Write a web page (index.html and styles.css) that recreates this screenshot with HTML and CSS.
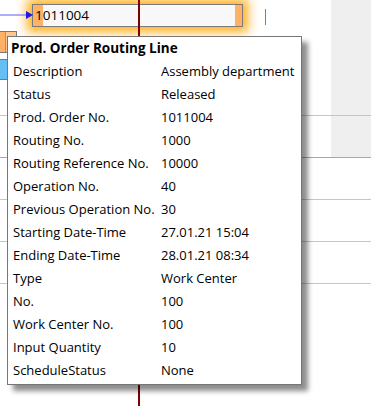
FILE: index.html
```html
<!DOCTYPE html>
<html lang="en">
<head>
  <meta charset="UTF-8">
  <meta name="viewport" content="width=device-width, initial-scale=1.0">
  <title>Routing Line Tooltip</title>
  <link rel="stylesheet" href="styles.css">
</head>
<body>
  <div class="chart">
    <div class="rows">
      <div class="row row-top"><div class="lane"></div><div class="side"></div></div>
      <div class="row"><div class="lane"></div><div class="side"></div></div>
      <div class="row"><div class="lane"></div></div>
      <div class="row"><div class="lane"></div></div>
      <div class="row"><div class="lane"></div></div>
      <div class="row row-last"><div class="lane"></div></div>
    </div>

    <div class="bar bar-active">1011004</div>
    <div class="bar bar-orange"></div>
    <div class="bar bar-blue"></div>
    <div class="tick"></div>
    <div class="timeline"></div>

    <svg class="link" width="34" height="10" viewBox="0 0 34 10">
      <line x1="0" y1="5" x2="28" y2="5" stroke="#5a5aff" stroke-width="1"/>
      <polygon points="26,1 33,5 26,9" fill="#1c1cf0"/>
    </svg>

    <div class="tooltip">
      <div class="tooltip-title">Prod. Order Routing Line</div>
      <div class="fields">
        <span>Description</span><span>Assembly department</span>
        <span>Status</span><span>Released</span>
        <span>Prod. Order No.</span><span>1011004</span>
        <span>Routing No.</span><span>1000</span>
        <span>Routing Reference No.</span><span>10000</span>
        <span>Operation No.</span><span>40</span>
        <span>Previous Operation No.</span><span>30</span>
        <span>Starting Date-Time</span><span>27.01.21 15:04</span>
        <span>Ending Date-Time</span><span>28.01.21 08:34</span>
        <span>Type</span><span>Work Center</span>
        <span>No.</span><span>100</span>
        <span>Work Center No.</span><span>100</span>
        <span>Input Quantity</span><span>10</span>
        <span>ScheduleStatus</span><span>None</span>
      </div>
    </div>
  </div>
</body>
</html>
```

FILE: styles.css
```css
body {
  margin: 0;
  background: white;
  font-family: "Open Sans", "Noto Sans", sans-serif;
  color: black;
}
.chart {
  position: relative;
  width: 371px;
  height: 406px;
  overflow: hidden;
}
.rows {
  display: flex;
  flex-direction: column;
  height: 100%;
}
.row {
  display: flex;
  height: 41px;
  border-bottom: 1px solid #c6c6c6;
}
.row-top {
  height: 115px;
}
.row-last {
  flex: 1;
  border-bottom: none;
}
.lane {
  flex: 1;
}
.side {
  width: 40px;
  background: #efefef;
}
.row:nth-child(2) {
  border-bottom-color: #a8a8a8;
}

/* chart bars */
.bar {
  position: absolute;
  box-sizing: border-box;
  border: 1px solid #7a7a7a;
}
.bar-active {
  left: 32px;
  top: 4px;
  width: 211px;
  height: 23px;
  padding-left: 2px;
  font-size: 13.5px;
  line-height: 21px;
  background: linear-gradient(to right, #ffb266 10px, #f8f8f8 10px, #f8f8f8 calc(100% - 7px), #ffb266 calc(100% - 7px));
  box-shadow: 0 0 10px 5px rgba(255, 166, 0, 0.9);
}
.bar-orange {
  left: -10px;
  top: 31px;
  width: 27px;
  height: 22px;
  background: linear-gradient(to right, #ffb266 14px, #999 14px, #999 15px, #ffc690 15px);
}
.bar-blue {
  left: -10px;
  top: 59px;
  width: 30px;
  height: 21px;
  background: #64c0f4;
}
.tick {
  position: absolute;
  left: 265px;
  top: 9px;
  width: 1px;
  height: 16px;
  background: #808080;
}
.timeline {
  position: absolute;
  left: 138px;
  top: 0;
  width: 2px;
  height: 100%;
  background: #800000;
}
.link {
  position: absolute;
  left: 0;
  top: 10px;
}

/* tooltip */
.tooltip {
  position: absolute;
  left: 7px;
  top: 36px;
  width: 295px;
  box-sizing: border-box;
  background: white;
  border: 1px solid #767676;
  padding-bottom: 2px;
  box-shadow: 6px 6px 5px rgba(0, 0, 0, 0.45);
  font-size: 13px;
}
.tooltip-title {
  padding: 0 3px;
  line-height: 23px;
  font-size: 13.5px;
  font-weight: bold;
}
.fields {
  display: grid;
  grid-template-columns: 148px 1fr;
  padding-left: 5px;
  line-height: 23px;
  white-space: nowrap;
}
```
